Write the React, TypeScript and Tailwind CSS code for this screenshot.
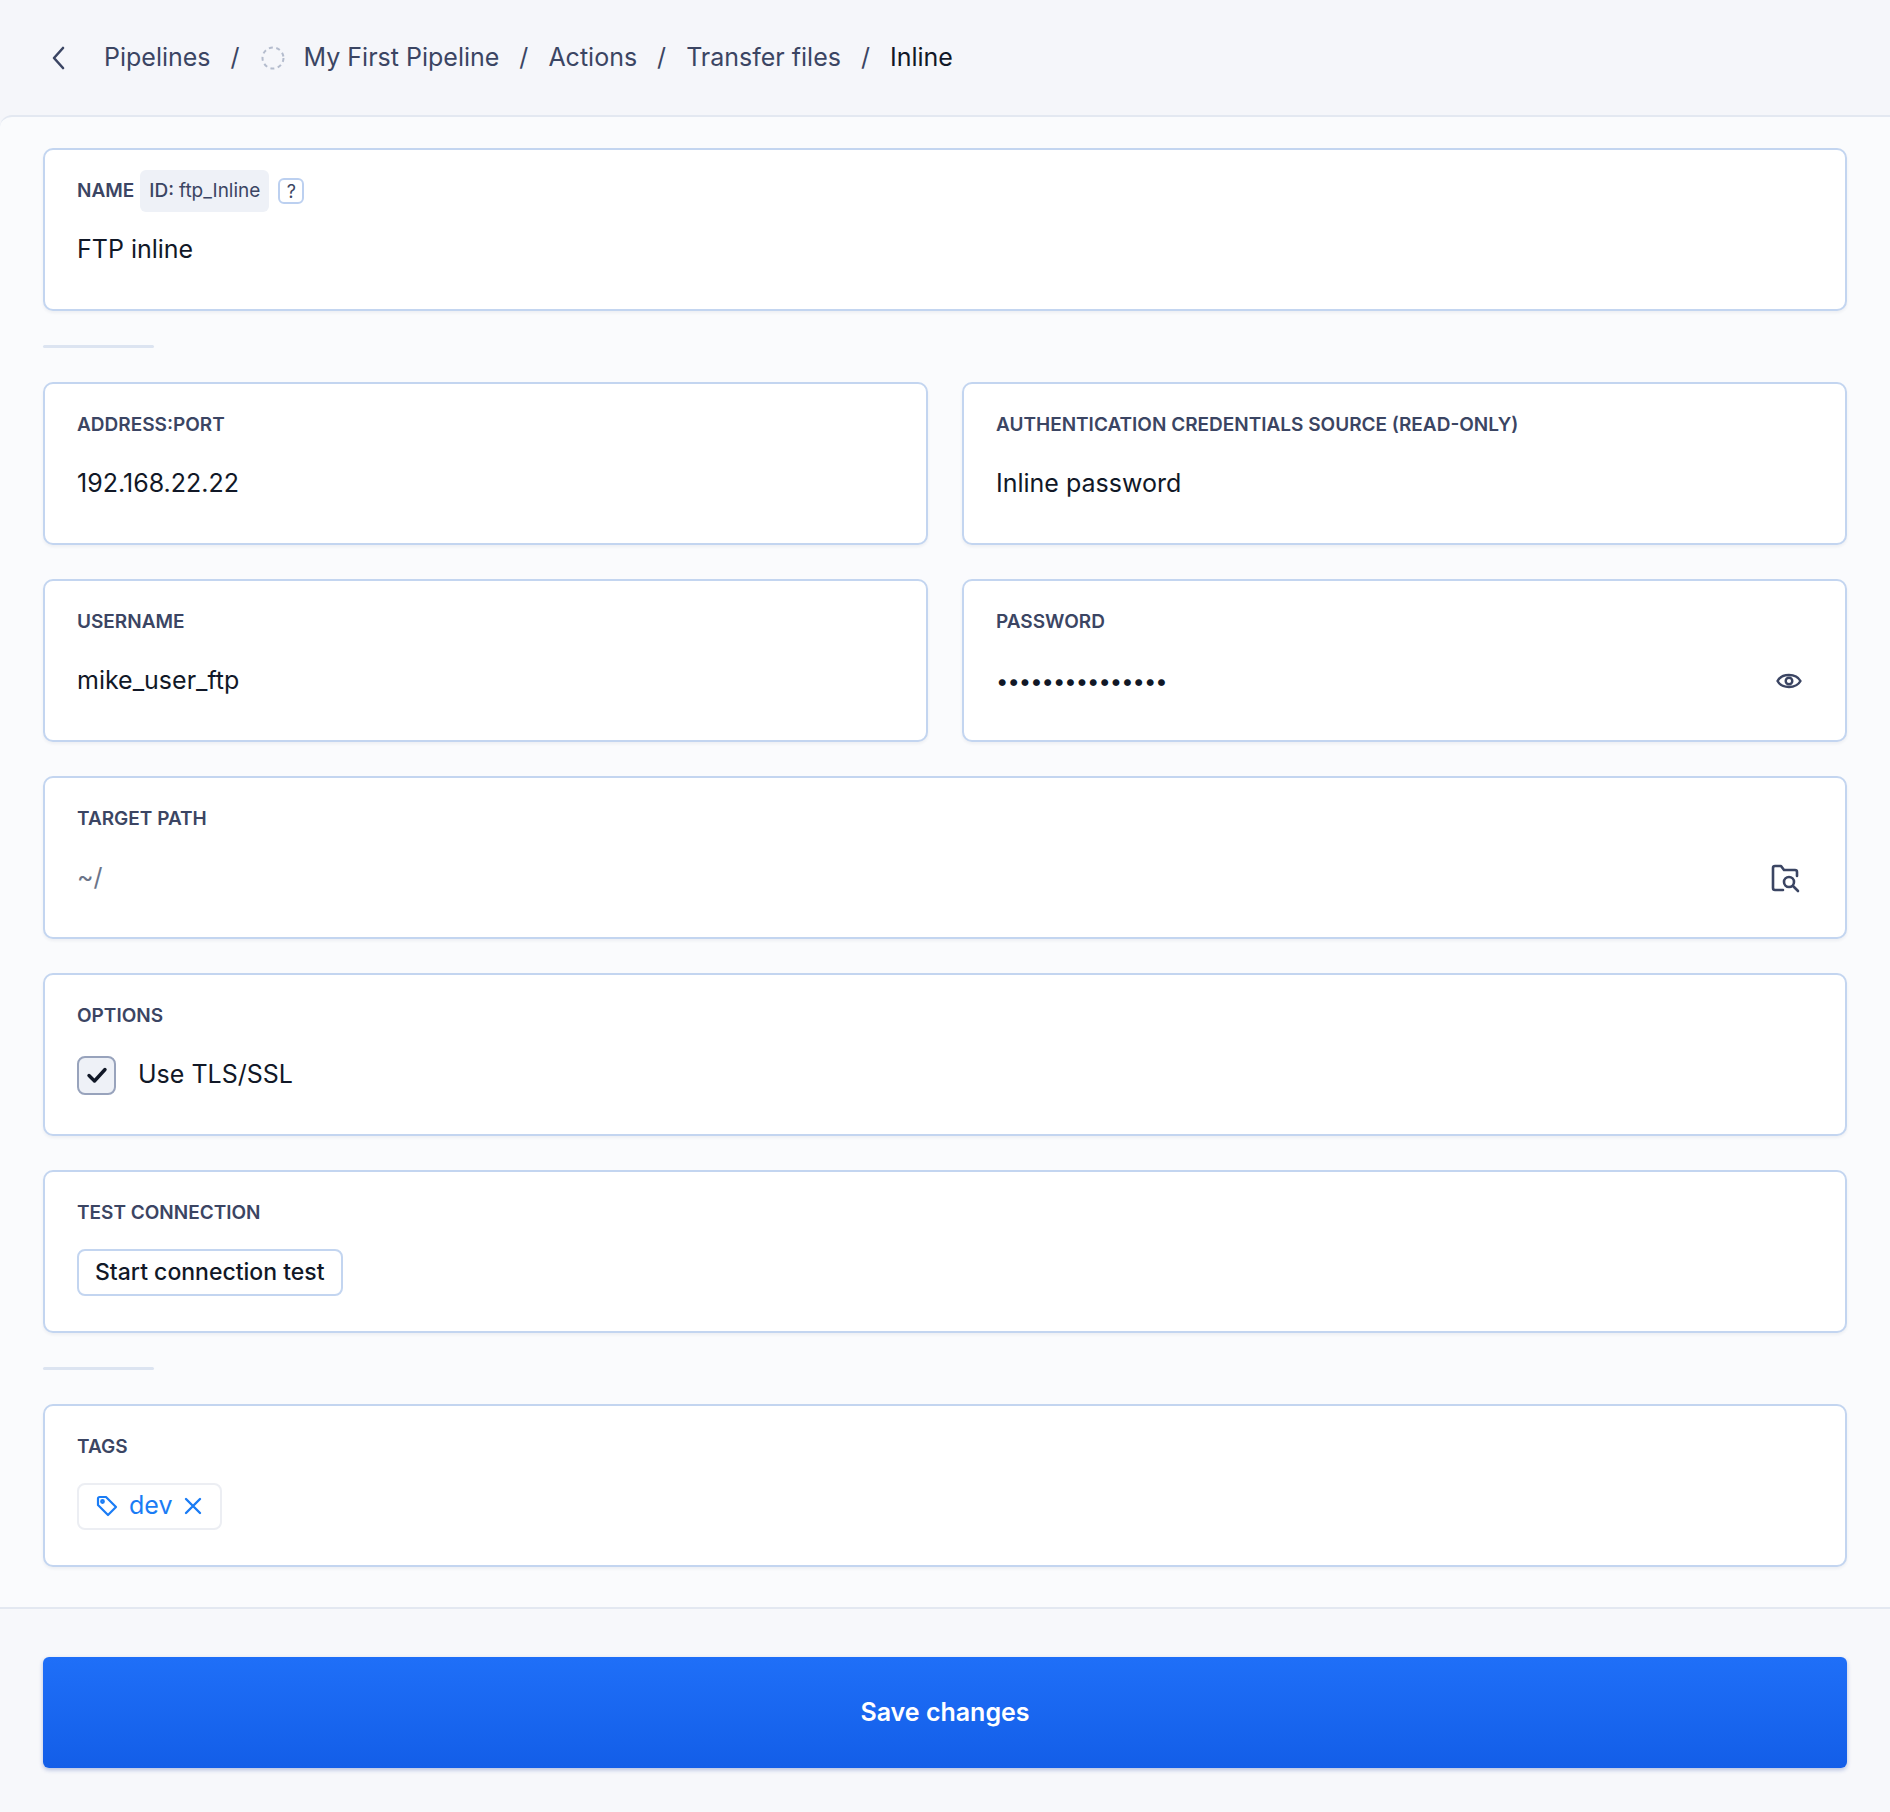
import React from "react";

const font = { fontFamily: "Inter, 'Noto Sans', sans-serif" };

function Card({ label, children, className = "" }: { label: React.ReactNode; children: React.ReactNode; className?: string }) {
  return (
    <div className={"h-[163px] rounded-[10px] border-2 border-[#c3d5f0] bg-white px-[32px] pt-[28px] shadow-[0_2px_3px_rgba(30,50,90,0.06)] " + className}>
      <div className="flex h-[26px] items-center text-[19px] font-semibold uppercase text-[#3b4563]">{label}</div>
      <div className="mt-[26px] flex h-[40px] items-center">{children}</div>
    </div>
  );
}

const Divider = () => <div className="h-[3px] w-[111px] rounded bg-[#dce4f1]" />;

export default function App() {
  return (
    <div style={font} className="min-h-[1812px] w-[1890px] bg-[#f5f6fa] text-[#111827]">
      <div className="flex h-[115px] items-center pl-[48px] text-[25px] text-[#3b4563]">
        <svg width="22" height="28" viewBox="0 0 22 28" className="mr-[34px]"><path d="M15 4 L6 14 L15 24" fill="none" stroke="#3b4563" strokeWidth="2.6" strokeLinecap="round" strokeLinejoin="round" /></svg>
        <span>Pipelines</span>
        <span className="mx-[20px]">/</span>
        <svg width="26" height="26" viewBox="0 0 26 26" className="mr-[18px]"><circle cx="13" cy="13" r="10.5" fill="none" stroke="#b4bccd" strokeWidth="2" strokeDasharray="4 3.5" /></svg>
        <span>My First Pipeline</span>
        <span className="mx-[20px]">/</span>
        <span>Actions</span>
        <span className="mx-[20px]">/</span>
        <span>Transfer files</span>
        <span className="mx-[20px]">/</span>
        <span className="text-[#111827]">Inline</span>
      </div>
      <div className="rounded-tl-[12px] border-y-2 border-[#e3e8f1] bg-[#fafbfd] px-[43px] pb-[40px] pt-[31px]">
        <div className="flex flex-col gap-[34px]">
          <Card label={<><span>Name</span><span className="ml-[6px] rounded-md bg-[#eef1f7] px-[9px] py-[7px] text-[19px] font-medium normal-case">ID: <span className="font-normal">ftp_Inline</span></span><span className="ml-[9px] flex h-[26px] w-[26px] items-center justify-center rounded-md border-2 border-[#bcd0f0] text-[18px] font-normal">?</span></>}>
            <span className="text-[25px]">FTP inline</span>
          </Card>
          <Divider />
          <div className="grid grid-cols-2 gap-[34px]">
            <Card label="Address:port"><span className="text-[25px]">192.168.22.22</span></Card>
            <Card label="Authentication credentials source (read-only)"><span className="text-[25px]">Inline password</span></Card>
            <Card label="Username"><span className="text-[25px]">mike_user_ftp</span></Card>
            <Card label="Password">
              <div className="flex w-full items-center justify-between pr-[10px]">
                <span className="text-[22px] tracking-[-1px]">•••••••••••••••</span>
                <svg width="28" height="22" viewBox="0 0 28 22"><path d="M2.5 11 C7 3 21 3 25.5 11 C21 19 7 19 2.5 11 Z" fill="none" stroke="#3b4563" strokeWidth="2.4" strokeLinejoin="round" /><circle cx="14" cy="11" r="3.3" fill="none" stroke="#3b4563" strokeWidth="2.4" /></svg>
              </div>
            </Card>
          </div>
          <Card label="Target path">
            <div className="flex w-full items-center justify-between pr-[10px]">
              <span className="text-[25px] text-[#6b7489]">~/</span>
              <svg width="34" height="34" viewBox="0 0 34 34" fill="none" stroke="#3b4563" strokeWidth="2.6" strokeLinecap="round" strokeLinejoin="round"><path d="M14 29 H6 a2 2 0 0 1 -2 -2 V7 a2 2 0 0 1 2 -2 h6 l3 4 h11 a2 2 0 0 1 2 2 v4" /><circle cx="20" cy="21" r="5" /><path d="M24 25 L29 30" /></svg>
            </div>
          </Card>
          <Card label="Options">
            <div className="flex items-center">
              <div className="flex h-[39px] w-[39px] items-center justify-center rounded-[8px] border-2 border-[#98a3bc] bg-[#eef1f7]">
                <svg width="24" height="24" viewBox="0 0 24 24"><path d="M4 12.5 L9.5 18 L20 6.5" fill="none" stroke="#111827" strokeWidth="3.4" strokeLinecap="round" strokeLinejoin="round" /></svg>
              </div>
              <span className="ml-[22px] text-[25px]">Use TLS/SSL</span>
            </div>
          </Card>
          <Card label="Test connection">
            <button className="h-[47px] rounded-[8px] border-2 border-[#c3d5f0] bg-white px-[16px] text-[23px] font-medium text-[#111827]">Start connection test</button>
          </Card>
          <Divider />
          <Card label="Tags">
            <div className="flex h-[47px] items-center gap-[10px] rounded-[8px] border-2 border-[#eceef3] bg-white px-[16px] text-[25px] text-[#1a7cf5]">
              <svg width="24" height="24" viewBox="0 0 24 24" fill="none" stroke="#1a7cf5" strokeWidth="2.2" strokeLinejoin="round"><path d="M3 4.5 V11 L13 21 L21 13 L11 3 H4.5 A1.5 1.5 0 0 0 3 4.5 Z" /><circle cx="7.5" cy="7.5" r="1.3" /></svg>
              <span>dev</span>
              <svg width="22" height="22" viewBox="0 0 22 22"><path d="M4 4 L18 18 M18 4 L4 18" stroke="#1a7cf5" strokeWidth="2.4" strokeLinecap="round" /></svg>
            </div>
          </Card>
        </div>
      </div>
      <div className="bg-[#f7f8fb] px-[43px] pb-[44px] pt-[48px]">
        <button className="flex h-[111px] w-full items-center justify-center rounded-[6px] bg-gradient-to-b from-[#1f6ff8] to-[#135ee8] text-[25px] font-semibold text-white shadow-[0_2px_4px_rgba(20,60,160,0.3)]">Save changes</button>
      </div>
    </div>
  );
}
